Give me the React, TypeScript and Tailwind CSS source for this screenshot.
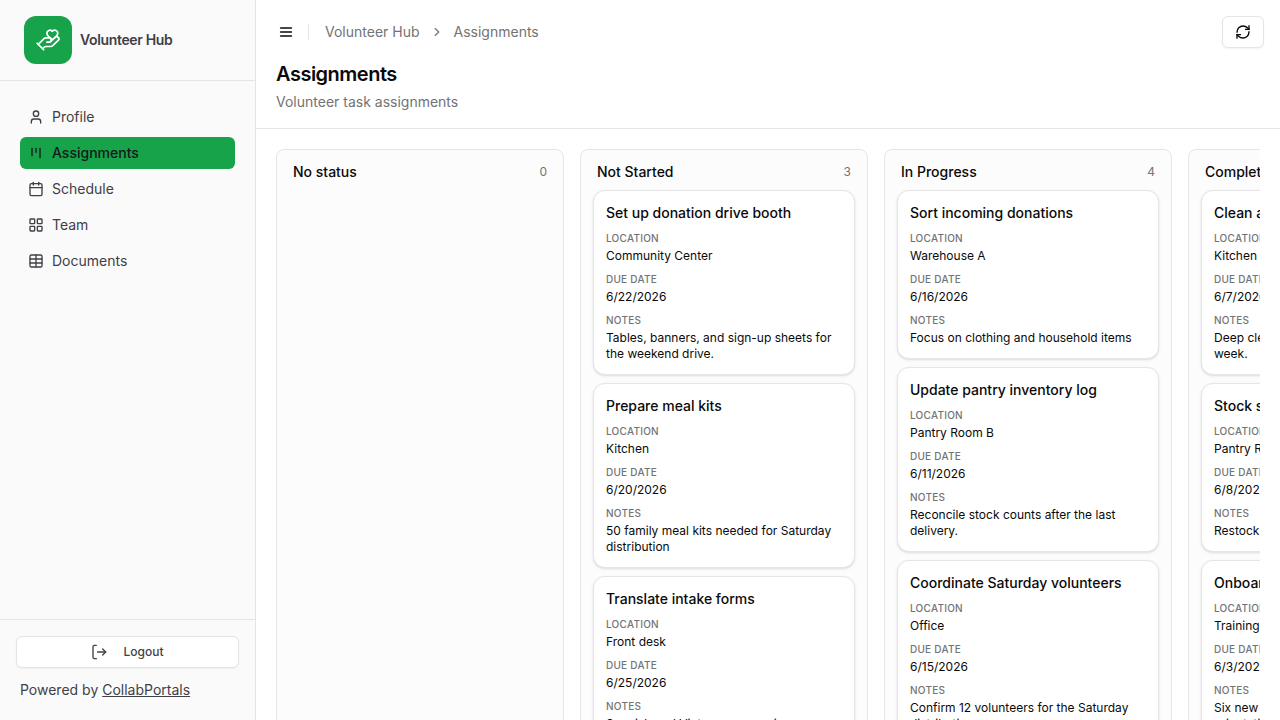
import type { ReactNode } from 'react';
import {
  Calendar,
  ChevronRight,
  HandHeart,
  LayoutGrid,
  RefreshCw,
  Table,
  User,
} from 'lucide-react';

interface Task {
  title: string;
  location: string;
  dueDate: string;
  notes: string;
}

interface BoardColumn {
  id: string;
  label: string;
  tasks: Task[];
}

const columns: BoardColumn[] = [
  { id: 'none', label: 'No status', tasks: [] },
  {
    id: 'not-started',
    label: 'Not Started',
    tasks: [
      {
        title: 'Set up donation drive booth',
        location: 'Community Center',
        dueDate: '6/22/2026',
        notes: 'Tables, banners, and sign-up sheets for the weekend drive.',
      },
      {
        title: 'Prepare meal kits',
        location: 'Kitchen',
        dueDate: '6/20/2026',
        notes: '50 family meal kits needed for Saturday distribution',
      },
      {
        title: 'Translate intake forms',
        location: 'Front desk',
        dueDate: '6/25/2026',
        notes: 'Spanish and Vietnamese versions',
      },
    ],
  },
  {
    id: 'in-progress',
    label: 'In Progress',
    tasks: [
      {
        title: 'Sort incoming donations',
        location: 'Warehouse A',
        dueDate: '6/16/2026',
        notes: 'Focus on clothing and household items',
      },
      {
        title: 'Update pantry inventory log',
        location: 'Pantry Room B',
        dueDate: '6/11/2026',
        notes: 'Reconcile stock counts after the last delivery.',
      },
      {
        title: 'Coordinate Saturday volunteers',
        location: 'Office',
        dueDate: '6/15/2026',
        notes: 'Confirm 12 volunteers for the Saturday distribution',
      },
      {
        title: 'Plan delivery routes',
        location: 'Office',
        dueDate: '6/18/2026',
        notes: 'Group stops by neighborhood',
      },
    ],
  },
  {
    id: 'completed',
    label: 'Completed',
    tasks: [
      {
        title: 'Clean and sanitize kitchen',
        location: 'Kitchen',
        dueDate: '6/7/2026',
        notes: 'Deep clean completed for the coming week.',
      },
      {
        title: 'Stock shelves',
        location: 'Pantry Room A',
        dueDate: '6/8/2026',
        notes: 'Restock canned goods and dry staples',
      },
      {
        title: 'Onboard new volunteers',
        location: 'Training Room',
        dueDate: '6/3/2026',
        notes: 'Six new volunteers have completed orientation',
      },
    ],
  },
];

interface IconProps {
  className?: string;
  strokeWidth?: number;
  children?: ReactNode;
}

const StrokeIcon = ({ className, strokeWidth = 2, children }: IconProps) => (
  <svg
    viewBox="0 0 24 24"
    fill="none"
    stroke="currentColor"
    strokeWidth={strokeWidth}
    strokeLinecap="round"
    strokeLinejoin="round"
    className={className}
    aria-hidden="true"
  >
    {children}
  </svg>
);

const KanbanIcon = ({ className }: IconProps) => (
  <StrokeIcon className={className}>
    <path d="M6 5v11" />
    <path d="M12 5v6" />
    <path d="M18 5v14" />
  </StrokeIcon>
);

const MenuIcon = ({ className }: IconProps) => (
  <StrokeIcon className={className} strokeWidth={2.5}>
    <path d="M4 6h16" />
    <path d="M4 12h16" />
    <path d="M4 18h16" />
  </StrokeIcon>
);

const LogoutIcon = ({ className }: IconProps) => (
  <StrokeIcon className={className}>
    <path d="M8 22H5a2 2 0 0 1-2-2V4a2 2 0 0 1 2-2h3" />
    <path d="M10 12h12" />
    <path d="m17.5 16.5 4.5-4.5-4.5-4.5" />
  </StrokeIcon>
);

const navItems = [
  { label: 'Profile', icon: User, active: false },
  { label: 'Assignments', icon: KanbanIcon, active: true },
  { label: 'Schedule', icon: Calendar, active: false },
  { label: 'Team', icon: LayoutGrid, active: false },
  { label: 'Documents', icon: Table, active: false },
];

const Sidebar = () => (
  <aside className="flex w-64 shrink-0 flex-col border-r border-zinc-200 bg-[#fafafa] text-zinc-700">
    <div className="flex items-center gap-2 border-b border-zinc-200 px-6 py-4">
      <div className="flex size-12 items-center justify-center rounded-xl bg-[#16a34a] text-white">
        <HandHeart className="size-[26px]" strokeWidth={1.6} />
      </div>
      <span className="text-sm font-semibold tracking-tight">Volunteer Hub</span>
    </div>

    <nav className="flex flex-1 flex-col gap-1 p-5">
      {navItems.map(({ label, icon: Icon, active }) => (
        <a
          key={label}
          href="#"
          aria-current={active ? 'page' : undefined}
          className={`flex h-8 items-center gap-2 rounded-md px-2 text-sm ${
            active ? 'bg-[#16a34a] font-medium text-zinc-900' : ''
          }`}
        >
          <Icon className="size-4" />
          {label}
        </a>
      ))}
    </nav>

    <div className="border-t border-zinc-200 px-4 pt-4 pb-5">
      <button className="flex h-8 w-full items-center justify-center gap-4 rounded-md border border-zinc-200 bg-white text-xs font-medium shadow-xs">
        <LogoutIcon className="size-4" />
        Logout
      </button>
      <p className="mt-3 px-1 text-sm">
        Powered by{' '}
        <a href="#" className="underline">
          CollabPortals
        </a>
      </p>
    </div>
  </aside>
);

const PageHeader = () => (
  <header className="border-b border-neutral-200 pt-4 pr-4 pb-4 pl-5">
    <div className="flex h-8 items-center justify-between">
      <div className="flex items-center">
        <button aria-label="Toggle sidebar" className="flex size-5 items-center justify-center">
          <MenuIcon className="size-4" />
        </button>
        <div className="ml-3 h-4 w-px bg-neutral-200" />
        <nav aria-label="Breadcrumb" className="ml-4 flex items-center gap-2.5 text-sm text-neutral-500">
          <a href="#">Volunteer Hub</a>
          <ChevronRight className="size-3.5" />
          <span>Assignments</span>
        </nav>
      </div>
      <button
        aria-label="Refresh"
        className="flex h-8 items-center rounded-md border border-neutral-200 bg-white px-3 shadow-xs"
      >
        <RefreshCw className="size-4" strokeLinecap="square" strokeLinejoin="miter" />
      </button>
    </div>
    <h1 className="mt-3 text-xl font-semibold tracking-tight">Assignments</h1>
    <p className="mt-1 text-sm text-neutral-500">Volunteer task assignments</p>
  </header>
);

const Field = ({ label, value }: { label: string; value: string }) => (
  <div>
    <dt className="text-[10px] leading-[15px] font-medium tracking-wide text-neutral-500 uppercase">{label}</dt>
    <dd className="mt-0.5 text-xs">{value}</dd>
  </div>
);

const TaskCard = ({ task }: { task: Task }) => (
  <article className="rounded-xl border border-neutral-200 bg-white p-3 shadow-sm">
    <h3 className="text-sm font-medium">{task.title}</h3>
    <dl className="mt-2 space-y-2">
      <Field label="Location" value={task.location} />
      <Field label="Due Date" value={task.dueDate} />
      <Field label="Notes" value={task.notes} />
    </dl>
  </article>
);

const App = () => {
  return (
    <div className="flex h-screen overflow-hidden bg-white font-['Inter',sans-serif] text-neutral-950">
      <Sidebar />
      <main className="flex min-w-0 flex-1 flex-col">
        <PageHeader />
        <div className="min-h-0 flex-1 overflow-y-auto p-5 [scrollbar-width:none]">
          <div className="flex min-h-full gap-4 overflow-x-auto [scrollbar-width:none]">
            {columns.map((column) => (
              <section
                key={column.id}
                className="w-72 shrink-0 rounded-lg border border-neutral-200 bg-neutral-50/60 px-3 pb-3"
              >
                <div className="flex h-10 items-center justify-between px-1 pt-1">
                  <h2 className="text-sm font-medium">{column.label}</h2>
                  <span className="text-xs text-neutral-500">{column.tasks.length}</span>
                </div>
                <div className="space-y-2">
                  {column.tasks.map((task) => (
                    <TaskCard key={task.title} task={task} />
                  ))}
                </div>
              </section>
            ))}
          </div>
        </div>
      </main>
    </div>
  );
};

export default App;
